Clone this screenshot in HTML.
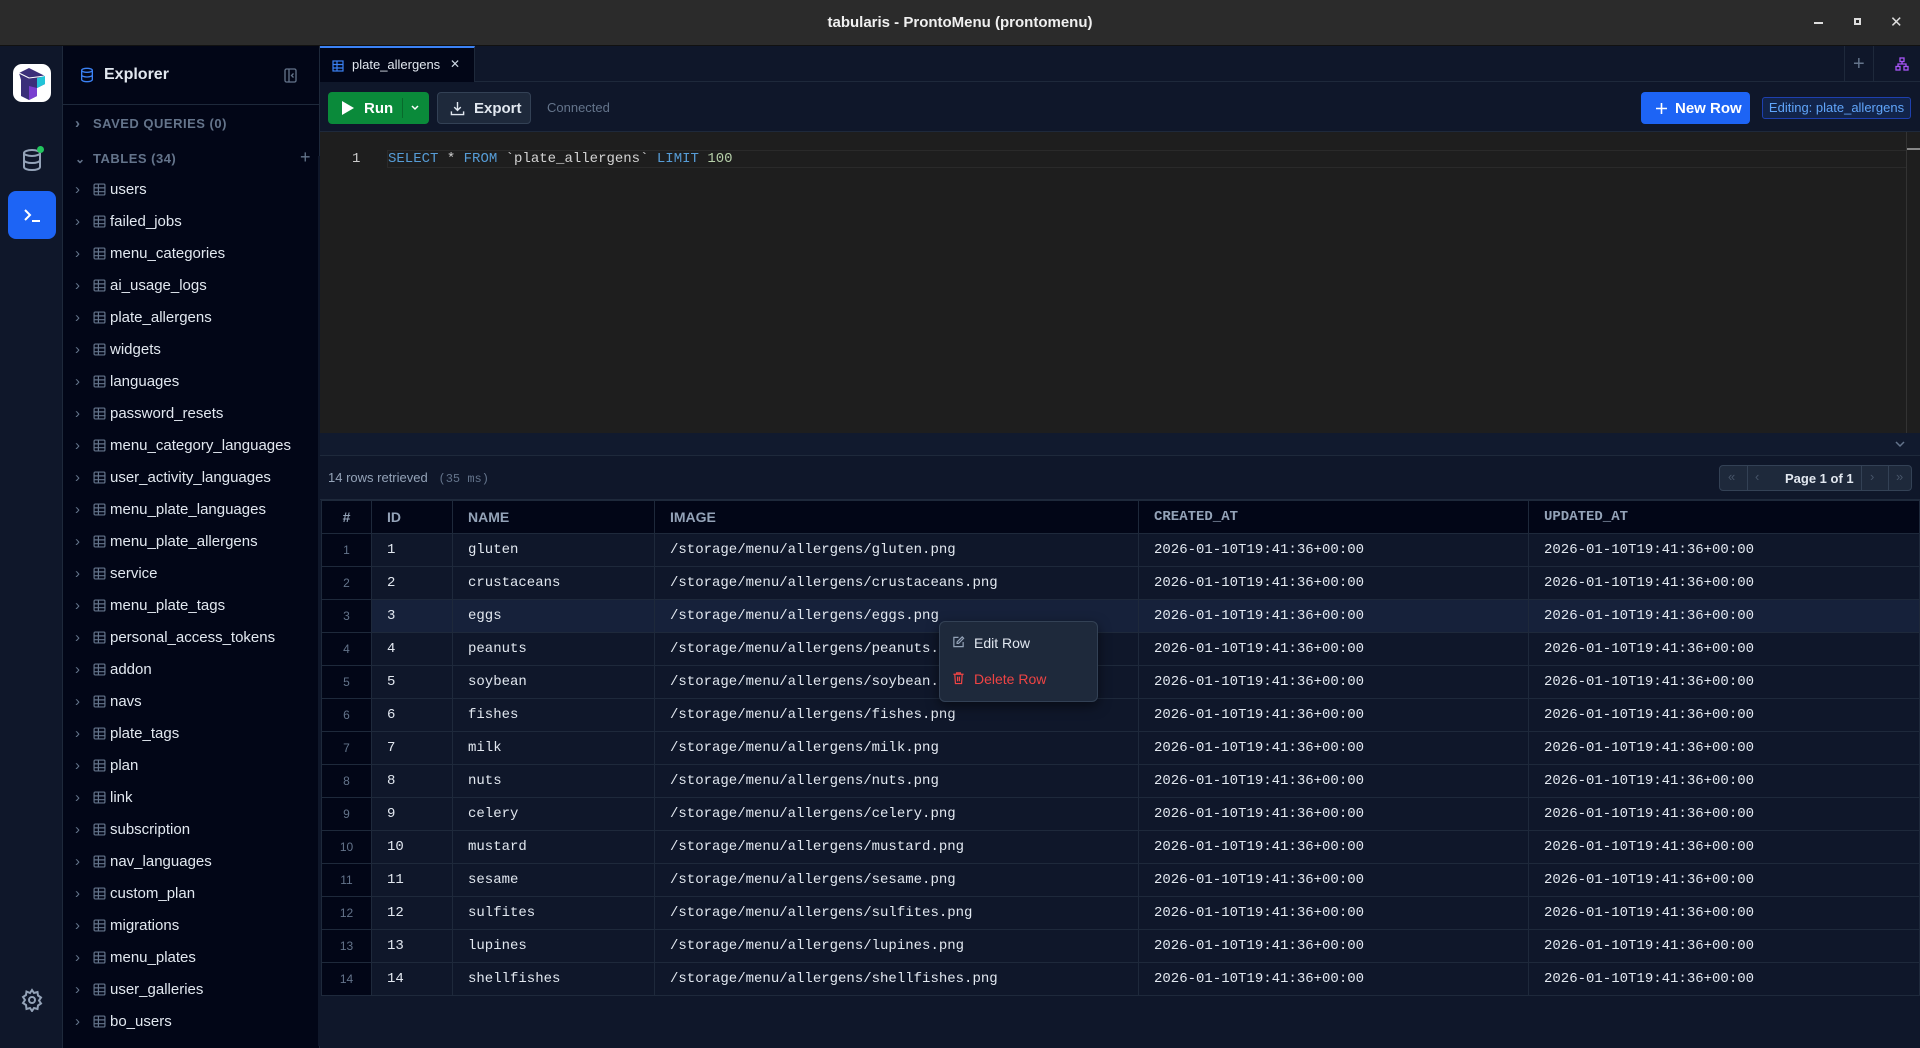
<!DOCTYPE html>
<html><head><meta charset="utf-8"><style>
*{box-sizing:border-box;margin:0;padding:0}
body{width:1920px;height:1048px;overflow:hidden;background:#0f172a;font-family:"Liberation Sans",sans-serif;position:relative;color:#e2e8f0}
.a{position:absolute}
.mono{font-family:"Liberation Mono",monospace}
#title{left:0;top:0;width:1920px;height:46px;background:#2b2b2b;border-bottom:1px solid #111;text-align:center;line-height:45px;font-size:15px;font-weight:bold;color:#f0f0f0}
#rail{left:0;top:46px;width:63px;height:1002px;background:#0f172a;border-right:1px solid #1e293b}
#side{left:63px;top:46px;width:257px;height:1002px;background:#020617;border-right:1px solid #1e293b}
.item{position:absolute;left:12px;font-size:15px;color:#e2e8f0;height:20px;line-height:20px;white-space:nowrap}
.item .ch{display:inline-block;width:18px;color:#64748b;font-size:15px}
.tb{display:inline-block;vertical-align:-2px;margin-right:4px}
table{border-collapse:collapse}
td,th{height:33px;border:1px solid #1e293b;text-align:left;padding-left:15px;font-size:14px;white-space:nowrap}
th{background:#020617;color:#94a3b8;font-weight:bold;font-size:14px;font-family:"Liberation Sans",sans-serif}
td{background:#0f172a;color:#e2e8f0;font-family:"Liberation Mono",monospace}
td.n{background:#020617;color:#64748b;font-size:12px;text-align:center;padding:0;font-family:"Liberation Sans",sans-serif}
tr.h td{background:#16213a}
tr.h td.n{background:#020617}
</style></head><body>
<div id="title" class="a">tabularis - ProntoMenu (prontomenu)</div>
<div class="a" style="left:1814px;top:22px;width:9px;height:2px;background:#ddd"></div>
<div class="a" style="left:1854px;top:18px;width:7px;height:7px;border:2px solid #ddd"></div>
<div class="a" style="left:1890px;top:13px;color:#ddd;font-size:15px">✕</div>

<div id="rail" class="a">
 <div class="a" style="left:13px;top:18px;width:38px;height:38px;background:#fff;border-radius:9px;overflow:hidden">
  <svg width="38" height="38" viewBox="0 0 38 38"><path d="M6 9l10-5 16 8v8l-8 4v8l-8 4-8-4V16z" fill="#3b2f7a"/><path d="M6 9l10 5 16-2" stroke="#fff" fill="none"/><path d="M24 14l8-2v8l-8 4z" fill="#22c4d8"/><path d="M16 22l8 2v8l-8 4z" fill="#7a3fd0"/></svg>
 </div>
 <svg class="a" style="left:20px;top:102px" width="24" height="24" viewBox="0 0 24 24" fill="none" stroke="#94a3b8" stroke-width="2"><ellipse cx="12" cy="5" rx="8" ry="3"/><path d="M4 5v14c0 1.7 3.6 3 8 3s8-1.3 8-3V5M4 12c0 1.7 3.6 3 8 3s8-1.3 8-3"/></svg>
 <div class="a" style="left:37px;top:100px;width:7px;height:7px;border-radius:50%;background:#22c55e"></div>
 <div class="a" style="left:8px;top:145px;width:48px;height:48px;background:#1d64f5;border-radius:8px">
  <svg class="a" style="left:12px;top:12px" width="24" height="24" viewBox="0 0 24 24" fill="none" stroke="#fff" stroke-width="2"><path d="M5 7l5 5-5 5M12 18h8"/></svg>
 </div>
 <svg class="a" style="left:20px;top:942px" width="24" height="24" viewBox="0 0 24 24" fill="none" stroke="#94a3b8" stroke-width="2"><circle cx="12" cy="12" r="3"/><path d="M12 2l2 3 3.5-1 .5 3.5 3 2-2 3 2 3-3 2-.5 3.5-3.5-1-2 3-2-3-3.5 1L6 17 3 15l2-3-2-3 3-2 .5-3.5L10 5z"/></svg>
</div>

<div id="side" class="a">
 <svg class="a" style="left:16px;top:21px" width="16" height="16" viewBox="0 0 24 24" fill="none" stroke="#3b82f6" stroke-width="2"><ellipse cx="12" cy="5" rx="8" ry="3"/><path d="M4 5v14c0 1.7 3.6 3 8 3s8-1.3 8-3V5M4 12c0 1.7 3.6 3 8 3s8-1.3 8-3"/></svg>
 <div class="a" style="left:41px;top:20px;font-size:16px;font-weight:bold;color:#e2e8f0">Explorer</div>
 <svg class="a" style="left:221px;top:22px" width="13" height="15" viewBox="0 0 13 15" fill="none" stroke="#64748b" stroke-width="1.3"><rect x="1" y="1" width="11" height="13" rx="1.5"/><path d="M5 1v13M9.5 5.5L7.5 7.5l2 2"/></svg>
 <div class="a" style="left:0;top:58px;width:256px;height:1px;background:#1e293b"></div>
 <div class="item" style="top:68px;color:#64748b;font-size:13px;font-weight:bold;letter-spacing:.5px"><span class="ch">›</span>SAVED QUERIES (0)</div>
 <div class="item" style="top:103px;color:#64748b;font-size:13px;font-weight:bold;letter-spacing:.5px"><span class="ch" style="font-size:12px">⌄</span>TABLES (34)</div>
 <div class="a" style="left:237px;top:101px;color:#64748b;font-size:18px">+</div>
 <div class="a" style="left:255px;top:110px;width:2px;height:890px;background:#0f172a"></div>
 <div id="items"></div>
</div>

<div class="a" style="left:320px;top:46px;width:1600px;height:36px;background:#0f172a;border-bottom:1px solid #1e293b"></div>
<div class="a" style="left:320px;top:46px;width:155px;height:36px;background:#020617;border-top:2px solid #3b82f6;border-right:1px solid #1e293b">
 <svg class="a" style="left:12px;top:12px" width="12" height="12" viewBox="0 0 12 12" fill="none" stroke="#3b82f6" stroke-width="1.2"><rect x="1" y="1" width="10" height="10"/><path d="M1 4.5h10M1 8h10M5 1v10"/></svg>
 <div class="a" style="left:32px;top:9px;font-size:13px;color:#e2e8f0">plate_allergens</div>
 <div class="a" style="left:130px;top:9px;font-size:12px;color:#cbd5e1">✕</div>
</div>
<div class="a" style="left:1844px;top:46px;width:1px;height:36px;background:#1e293b"></div>
<div class="a" style="left:1873px;top:46px;width:1px;height:36px;background:#1e293b"></div>
<div class="a" style="left:1853px;top:53px;color:#64748b;font-size:20px">+</div>
<svg class="a" style="left:1895px;top:57px" width="14" height="14" viewBox="0 0 14 14" fill="none" stroke="#a855f7" stroke-width="1.3"><rect x="5" y="1" width="4" height="3.5"/><rect x="1" y="9.5" width="4" height="3.5"/><rect x="9" y="9.5" width="4" height="3.5"/><path d="M7 4.5v2.5M3 9.5V7h8v2.5"/></svg>

<div class="a" style="left:320px;top:82px;width:1600px;height:50px;background:#0f172a;border-bottom:1px solid #1e293b"></div>
<div class="a" style="left:328px;top:92px;width:101px;height:32px;background:#0a8a3a;border-radius:4px">
 <svg class="a" style="left:13px;top:8px" width="14" height="16" viewBox="0 0 14 16"><path d="M1 1l12 7-12 7z" fill="#fff"/></svg>
 <div class="a" style="left:36px;top:8px;font-size:15px;font-weight:bold;color:#fff">Run</div>
 <div class="a" style="left:74px;top:6px;width:1px;height:20px;background:#086a2c"></div>
 <svg class="a" style="left:82px;top:12px" width="10" height="8" viewBox="0 0 10 8" fill="none" stroke="#fff" stroke-width="1.5"><path d="M2 2l3 3 3-3"/></svg>
</div>
<div class="a" style="left:437px;top:92px;width:94px;height:32px;background:#1e293b;border:1px solid #334155;border-radius:4px">
 <svg class="a" style="left:12px;top:8px" width="15" height="15" viewBox="0 0 16 16" fill="none" stroke="#e2e8f0" stroke-width="1.5"><path d="M8 1v9M4.5 6.5L8 10l3.5-3.5M1.5 11v3.5h13V11"/></svg>
 <div class="a" style="left:36px;top:7px;font-size:15px;font-weight:bold;color:#e2e8f0">Export</div>
</div>
<div class="a" style="left:547px;top:100px;font-size:13px;color:#64748b">Connected</div>
<div class="a" style="left:1641px;top:92px;width:109px;height:32px;background:#1d64f5;border-radius:4px">
 <svg class="a" style="left:14px;top:10px" width="13" height="13" viewBox="0 0 13 13" stroke="#fff" stroke-width="1.6"><path d="M6.5 1v11M1 6.5h11"/></svg>
 <div class="a" style="left:34px;top:8px;font-size:15px;font-weight:bold;color:#fff">New Row</div>
</div>
<div class="a" style="left:1762px;top:97px;width:149px;height:22px;background:#12244a;border:1px solid #1e40af;border-radius:3px;font-size:13px;color:#60a5fa;line-height:20px;text-align:center">Editing: plate_allergens</div>

<div class="a" style="left:320px;top:132px;width:1600px;height:301px;background:#1e1e1e"></div>
<div class="a" style="left:387px;top:150px;width:1520px;height:18px;border:1px solid #2a2a2a"></div>
<div class="a mono" style="left:352px;top:151px;font-size:14px;color:#ccc">1</div>
<div class="a mono" style="left:388px;top:151px;font-size:14px;color:#d4d4d4;white-space:pre"><span style="color:#569cd6">SELECT</span> * <span style="color:#569cd6">FROM</span> `plate_allergens` <span style="color:#569cd6">LIMIT</span> <span style="color:#b5cea8">100</span></div>
<div class="a" style="left:1906px;top:132px;width:1px;height:301px;background:#333"></div>
<div class="a" style="left:1907px;top:148px;width:13px;height:2px;background:#888"></div>

<div class="a" style="left:320px;top:433px;width:1600px;height:23px;background:#111a2e;border-bottom:1px solid #1e293b"></div>
<svg class="a" style="left:1894px;top:440px" width="12" height="8" viewBox="0 0 12 8" fill="none" stroke="#64748b" stroke-width="1.5"><path d="M2 2l4 4 4-4"/></svg>
<div class="a" style="left:328px;top:470px;font-size:13px;color:#94a3b8">14 rows retrieved <span class="mono" style="color:#64748b;font-size:12px">&nbsp;(35 ms)</span></div>
<div class="a" style="left:1719px;top:465px;width:193px;height:26px;background:#1e293b;border:1px solid #334155;border-radius:4px;font-size:13px">
 <div class="a" style="left:8px;top:3px;color:#475569">«</div><div class="a" style="left:27px;top:0;width:1px;height:24px;background:#334155"></div>
 <div class="a" style="left:35px;top:3px;color:#475569">‹</div>
 <div class="a" style="left:65px;top:5px;color:#e2e8f0;font-weight:bold">Page 1 of 1</div>
 <div class="a" style="left:141px;top:0;width:1px;height:24px;background:#334155"></div><div class="a" style="left:150px;top:3px;color:#475569">›</div>
 <div class="a" style="left:168px;top:0;width:1px;height:24px;background:#334155"></div><div class="a" style="left:176px;top:3px;color:#475569">»</div>
</div>
<div class="a" style="left:320px;top:499px;width:1600px;height:1px;background:#1e293b"></div>

<table class="a" style="left:321px;top:500px;width:1599px;table-layout:fixed">
<colgroup><col style="width:50px"><col style="width:81px"><col style="width:202px"><col style="width:484px"><col style="width:390px"><col></colgroup>
<tr><th style="text-align:center;padding:0">#</th><th>ID</th><th>NAME</th><th>IMAGE</th><th style="font-family:'Liberation Mono',monospace">CREATED_AT</th><th style="font-family:'Liberation Mono',monospace">UPDATED_AT</th></tr>
<tbody id="rows"></tbody>
</table>

<div class="a" style="left:939px;top:621px;width:159px;height:81px;background:#1e293b;border:1px solid #334155;border-radius:6px;box-shadow:0 4px 12px rgba(0,0,0,.5)">
 <svg class="a" style="left:12px;top:13px" width="13" height="14" viewBox="0 0 14 14" fill="none" stroke="#94a3b8" stroke-width="1.3"><path d="M7 2H2v10h10V7M11 1.5l1.5 1.5L7 8.5H5.5V7z"/></svg>
 <div class="a" style="left:34px;top:13px;font-size:14px;color:#e2e8f0">Edit Row</div>
 <svg class="a" style="left:12px;top:49px" width="13" height="14" viewBox="0 0 14 14" fill="none" stroke="#ef4444" stroke-width="1.3"><path d="M1.5 3h11M5 3V1.5h4V3M3 3l.7 10h6.6L11 3M6 5.5v5M8 5.5v5"/></svg>
 <div class="a" style="left:34px;top:49px;font-size:14px;color:#ef4444">Delete Row</div>
</div>

<script>
var t=["users","failed_jobs","menu_categories","ai_usage_logs","plate_allergens","widgets","languages","password_resets","menu_category_languages","user_activity_languages","menu_plate_languages","menu_plate_allergens","service","menu_plate_tags","personal_access_tokens","addon","navs","plate_tags","plan","link","subscription","nav_languages","custom_plan","migrations","menu_plates","user_galleries","bo_users"];
var h="";t.forEach(function(n,i){h+='<div class="item" style="top:'+(134+i*32)+'px"><span class="ch">›</span><svg class="tb" width="13" height="13" viewBox="0 0 12 12" fill="none" stroke="#64748b" stroke-width="1.1"><rect x="1" y="1" width="10" height="10" rx="1"/><path d="M1 4.5h10M1 8h10M5 1v10"/></svg>'+n+'</div>'});
document.getElementById("items").innerHTML=h;
var r=["gluten","crustaceans","eggs","peanuts","soybean","fishes","milk","nuts","celery","mustard","sesame","sulfites","lupines","shellfishes"];
var s="";r.forEach(function(n,i){var d="2026-01-10T19:41:36+00:00";s+='<tr'+(i==2?' class="h"':'')+'><td class="n">'+(i+1)+'</td><td>'+(i+1)+'</td><td>'+n+'</td><td>/storage/menu/allergens/'+n+'.png</td><td>'+d+'</td><td>'+d+'</td></tr>'});
document.getElementById("rows").innerHTML=s;
</script>
</body></html>
